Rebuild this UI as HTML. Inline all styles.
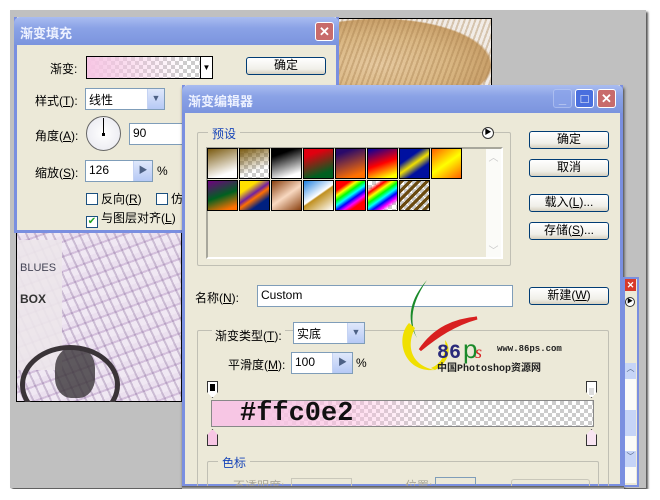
<!DOCTYPE html>
<html><head><meta charset="utf-8"><style>
*{box-sizing:border-box;margin:0;padding:0}
body{width:660px;height:500px;background:#fff;position:relative;overflow:hidden;font-family:"Liberation Sans","Noto Sans CJK SC",sans-serif;font-size:12px;color:#000}
.a{position:absolute}
.chk{background-color:#fff;background-image:linear-gradient(45deg,#ccc 25%,transparent 25%,transparent 75%,#ccc 75%),linear-gradient(45deg,#ccc 25%,transparent 25%,transparent 75%,#ccc 75%);background-size:8px 8px;background-position:0 0,4px 4px}
.win{background:#ece9d8;border:3px solid #7a8fe0;border-top:none}
.tb{background:linear-gradient(#a9bcf0,#8aa2e6 40%,#7b94de);color:#eef2ff;font-weight:bold;font-size:13px;padding:6px 6px}
.btn{position:absolute;border:1px solid #003c74;border-radius:3px;background:linear-gradient(#fff,#f0efe8 70%,#d6d0c0);text-align:center;font-size:12px;line-height:15px}
.inp{position:absolute;background:#fff;border:1px solid #7f9db9;font-size:12px;padding:2px 3px}
.sp{position:absolute;right:0;top:0;bottom:0;background:linear-gradient(#dfe8fb,#b6c9f5);border-left:1px solid #c5d3f3;color:#4d6185;text-align:center;font-size:9px}
.grp{position:absolute;border:1px solid #c0bfb4;border-radius:2px}
.gl{position:absolute;background:#ece9d8;color:#1644b8;padding:0 4px;font-size:12px}
.cb{display:inline-block;width:12px;height:12px;border:1px solid #1c5180;background:#fff;vertical-align:-2px;margin-right:3px}
.sw{position:absolute;width:31px;height:31px;border:1px solid #000}
.wb{position:absolute;top:4px;width:19px;height:19px;border:1px solid #fff;border-radius:3px;color:#fff;text-align:center;font-size:13px;line-height:17px;font-weight:bold}
</style></head><body>
<!-- canvas -->
<div class="a" style="left:10px;top:10px;width:636px;height:478px;background:#c0c0c0;box-shadow:2px 2px 2px #555"></div>
<div class="a" style="left:330px;top:18px;width:162px;height:68px;border:1px solid #000;background:repeating-linear-gradient(110deg,rgba(160,120,70,.35) 0 2px,transparent 2px 5px),radial-gradient(ellipse at 30% 70%,#e6c9a0,#d9b682 45%,#c9a06a 70%,#f2ece6 72%)"></div>
<div class="a" style="left:16px;top:232px;width:166px;height:170px;border:1px solid #000;background:repeating-linear-gradient(65deg,transparent 0 6px,rgba(120,90,140,.3) 6px 8px),repeating-linear-gradient(-20deg,#f0e8f3 0 7px,#d4c0dc 7px 9px,#ebe0ef 9px 14px)"></div>
<div class="a" style="left:17px;top:240px;width:45px;height:130px;background:#ece6ea;opacity:.9"></div>
<div class="a" style="left:20px;top:262px;font-size:11px;color:#445">BLUES</div>
<div class="a" style="left:20px;top:292px;font-size:12px;color:#333;font-weight:bold">BOX</div>
<div class="a" style="left:20px;top:345px;width:100px;height:80px;border:5px solid #3a3438;border-radius:50%;clip-path:inset(0 0 0 0)"></div>
<div class="a" style="left:55px;top:348px;width:40px;height:50px;background:#3a3438;border-radius:40%;opacity:.8"></div>
<div class="a" style="left:16px;top:402px;width:166px;height:30px;background:#c0c0c0"></div>

<!-- dialog 1 -->
<div class="a win" style="left:14px;top:17px;width:325px;height:216px">
 <div class="tb" style="margin:0 -3px;height:28px;border-radius:6px 6px 0 0">渐变填充</div>
</div>
<div class="wb" style="left:315px;top:22px;background:#c86b6b">✕</div>
<div class="a" style="left:50px;top:60px">渐变:</div>
<div class="a chk" style="left:86px;top:56px;width:127px;height:23px;border:1px solid #000"><div style="width:100%;height:100%;background:linear-gradient(90deg,#f7c6e4 0%,rgba(255,192,226,0) 80%)"></div></div>
<div class="a" style="left:200px;top:57px;width:12px;height:21px;background:#fff;border-left:1px solid #000;font-size:8px;text-align:center;line-height:21px">▼</div>
<div class="btn" style="left:246px;top:57px;width:80px;height:18px">确定</div>
<div class="a" style="left:35px;top:92px">样式(<u>T</u>):</div>
<div class="inp" style="left:85px;top:88px;width:80px;height:22px">线性<div class="sp" style="width:17px;line-height:18px">▼</div></div>
<div class="a" style="left:35px;top:127px">角度(<u>A</u>):</div>
<div class="a" style="left:86px;top:116px;width:35px;height:35px;border-radius:50%;border:1px solid #666;background:radial-gradient(#fff,#e6e6ee)"></div>
<div class="a" style="left:103px;top:118px;width:1px;height:16px;background:#000"></div>
<div class="a" style="left:102px;top:133px;width:3px;height:3px;background:#000"></div>
<div class="inp" style="left:129px;top:123px;width:60px;height:22px">90</div>
<div class="a" style="left:35px;top:164px">缩放(<u>S</u>):</div>
<div class="inp" style="left:85px;top:160px;width:68px;height:22px">126<div class="sp" style="width:19px;line-height:18px">▶</div></div>
<div class="a" style="left:157px;top:164px">%</div>
<div class="a" style="left:86px;top:190px"><span class="cb"></span>反向(<u>R</u>)</div>
<div class="a" style="left:156px;top:190px"><span class="cb"></span>仿</div>
<div class="a" style="left:86px;top:209px"><span class="cb" style="color:#21a121;font-size:10px;line-height:10px;text-align:center">✔</span>与图层对齐(<u>L</u>)</div>

<!-- dialog 2 -->
<div class="a win" style="left:182px;top:85px;width:441px;height:402px;box-shadow:1px 3px 3px #333">
 <div class="tb" style="margin:0 -3px;height:28px;border-radius:6px 6px 0 0">渐变编辑器</div>
</div>
<div class="wb" style="left:553px;top:89px;background:#8aa3ea;border-color:#b8c8f4;opacity:.7">_</div>
<div class="wb" style="left:575px;top:89px;background:#4a6fde">□</div>
<div class="wb" style="left:597px;top:89px;background:#c86b6b">✕</div>

<div class="grp" style="left:197px;top:132px;width:314px;height:134px"></div>
<div class="gl" style="left:208px;top:125px">预设</div>
<div class="a" style="left:482px;top:127px;width:12px;height:12px;border:1px solid #333;border-radius:50%;background:#fff;font-size:7px;line-height:10px;text-align:center">▶</div>
<div class="a" style="left:206px;top:147px;width:297px;height:112px;border:2px solid #a8a79c;border-right-color:#fff;border-bottom-color:#fff"></div>
<div class="a" style="left:486px;top:149px;width:15px;height:108px;background:#fbfbf8"><div style="height:16px;color:#c8c8c8;font-size:10px;text-align:center">︿</div><div style="position:absolute;bottom:0;width:15px;color:#c8c8c8;font-size:10px;text-align:center">﹀</div></div>
<div class="sw" style="left:207px;top:148px;background:linear-gradient(160deg,#7a5a10,#fff 80%)"></div>
<div class="sw chk" style="left:239px;top:148px"><div style="width:100%;height:100%;background:linear-gradient(160deg,#7a5a10,rgba(122,90,16,0) 70%)"></div></div>
<div class="sw" style="left:271px;top:148px;background:linear-gradient(160deg,#000 20%,#fff 85%)"></div>
<div class="sw" style="left:303px;top:148px;background:linear-gradient(160deg,#e00010 20%,#006020 80%)"></div>
<div class="sw" style="left:335px;top:148px;background:linear-gradient(160deg,#2a0a6a 15%,#ff7000 85%)"></div>
<div class="sw" style="left:367px;top:148px;background:linear-gradient(160deg,#0000a0,#f00 50%,#ff0 90%)"></div>
<div class="sw" style="left:399px;top:148px;background:linear-gradient(145deg,#0010a0 30%,#f0e000 50%,#0010a0 70%)"></div>
<div class="sw" style="left:431px;top:148px;background:linear-gradient(145deg,#ff6000,#ff0 50%,#ff6000)"></div>
<div class="sw" style="left:207px;top:180px;background:linear-gradient(160deg,#700080,#006020 50%,#ff7000 90%)"></div>
<div class="sw" style="left:239px;top:180px;background:linear-gradient(145deg,#ffe000 25%,#7020a0 45%,#ff7000 55%,#002080 75%)"></div>
<div class="sw" style="left:271px;top:180px;background:linear-gradient(145deg,#8a4010,#f8d8c0 50%,#8a4010)"></div>
<div class="sw" style="left:303px;top:180px;background:linear-gradient(145deg,#2080e0,#fff 48%,#c09020 52%,#fff)"></div>
<div class="sw" style="left:335px;top:180px;background:linear-gradient(145deg,red 20%,#ff0,#0f0,#0ff,#00f,#f0f,red 80%)"></div>
<div class="sw chk" style="left:367px;top:180px"><div style="width:100%;height:100%;background:linear-gradient(145deg,transparent 15%,red,#ff0,#0f0,#0ff,#00f,#f0f,transparent 85%)"></div></div>
<div class="sw chk" style="left:399px;top:180px"><div style="width:100%;height:100%;background:repeating-linear-gradient(135deg,#6a4a10 0 3px,transparent 3px 6px)"></div></div>

<div class="btn" style="left:529px;top:131px;width:80px;height:18px">确定</div>
<div class="btn" style="left:529px;top:159px;width:80px;height:18px">取消</div>
<div class="btn" style="left:529px;top:194px;width:80px;height:18px">载入(<u>L</u>)...</div>
<div class="btn" style="left:529px;top:222px;width:80px;height:18px">存储(<u>S</u>)...</div>

<div class="a" style="left:195px;top:289px">名称(<u>N</u>):</div>
<div class="inp" style="left:257px;top:285px;width:256px;height:22px">Custom</div>
<div class="btn" style="left:529px;top:287px;width:80px;height:18px">新建(<u>W</u>)</div>

<div class="grp" style="left:197px;top:330px;width:412px;height:157px;border-bottom:none"></div>
<div class="a" style="left:212px;top:327px;background:#ece9d8;padding:0 3px">渐变类型(<u>T</u>):</div>
<div class="inp" style="left:293px;top:322px;width:72px;height:22px">实底<div class="sp" style="width:17px;line-height:18px">▼</div></div>
<div class="a" style="left:228px;top:356px">平滑度(<u>M</u>):</div>
<div class="inp" style="left:291px;top:352px;width:62px;height:22px">100<div class="sp" style="width:20px;line-height:18px">▶</div></div>
<div class="a" style="left:356px;top:356px">%</div>

<!-- logo -->
<svg class="a" style="left:375px;top:278px" width="210" height="100">
 <path d="M52 2 C36 20 30 40 42 60 C32 40 40 20 52 2Z" fill="#1a8a2a"/>
 <path d="M45 72 C60 50 80 42 102 40 C80 46 62 58 45 72Z" fill="#d82020" stroke="#d82020" stroke-width="3"/>
 <path d="M34 45 C20 60 28 95 60 92 C38 88 30 70 40 50Z" fill="#f0e000"/>
 <path d="M60 92 C72 86 78 72 70 62 C72 76 66 86 56 90Z" fill="#f0e000"/>
 <text x="62" y="80" font-family="Liberation Mono,monospace" font-size="20" font-weight="bold" fill="#2a2a7a">86</text>
 <text x="88" y="80" font-family="Liberation Sans,sans-serif" font-size="26" fill="#1a8a2a">p</text>
 <text x="100" y="80" font-family="Liberation Serif,serif" font-size="18" fill="#d82020" font-style="italic">s</text>
 <text x="122" y="73" font-family="Liberation Mono,monospace" font-size="9" font-weight="bold" fill="#222">www.86ps.com</text>
 <text x="62" y="93" font-family="Liberation Mono,'Noto Sans CJK SC',monospace" font-size="10" font-weight="bold" fill="#222">中国Photoshop资源网</text>
</svg>

<!-- gradient bar -->
<div class="a" style="left:207px;top:381px;width:11px;height:17px;background:#fff;border:1px solid #333;clip-path:polygon(0 0,100% 0,100% 65%,50% 100%,0 65%)"><div style="margin:2px;height:7px;background:#000"></div></div>
<div class="a" style="left:586px;top:381px;width:11px;height:17px;background:#fff;border:1px solid #333;clip-path:polygon(0 0,100% 0,100% 65%,50% 100%,0 65%)"><div style="margin:2px;height:7px;background:#ddd;margin-top:6px"></div></div>
<div class="a chk" style="left:211px;top:400px;width:383px;height:27px;border:1px solid #888"><div style="width:100%;height:100%;background:linear-gradient(90deg,#f7c6e4 0%,#f7c6e4 12%,rgba(255,192,226,.6) 35%,rgba(255,192,226,0) 60%)"></div></div>
<div class="a" style="left:240px;top:398px;font-family:'Liberation Mono',monospace;font-weight:bold;font-size:27px;line-height:32px;color:#111">#ffc0e2</div>
<div class="a" style="left:207px;top:429px;width:11px;height:17px;background:#f7c6e4;border:1px solid #333;clip-path:polygon(50% 0,100% 35%,100% 100%,0 100%,0 35%)"></div>
<div class="a" style="left:586px;top:429px;width:11px;height:17px;background:#f8e4f2;border:1px solid #333;clip-path:polygon(50% 0,100% 35%,100% 100%,0 100%,0 35%)"></div>

<div class="grp" style="left:207px;top:461px;width:392px;height:26px;border-bottom:none"></div>
<div class="gl" style="left:218px;top:454px">色标</div>
<div class="a" style="left:233px;top:479px;height:8px;overflow:hidden;color:#aca899;line-height:14px">不透明度:</div>
<div class="a" style="left:291px;top:478px;width:61px;height:9px;border:1px solid #c9c7ba;border-bottom:none"></div>
<div class="a" style="left:405px;top:479px;height:8px;overflow:hidden;color:#aca899;line-height:14px">位置:</div>
<div class="a" style="left:435px;top:477px;width:41px;height:10px;border:1px solid #7f9db9;border-bottom:none"></div>
<div class="a" style="left:511px;top:479px;width:79px;height:8px;border:1px solid #c9c7ba;border-bottom:none;border-radius:3px 3px 0 0"></div>

<!-- right partial window -->
<div class="a" style="left:622px;top:277px;width:17px;height:210px;background:#ece9d8;border:2px solid #7a8fe0;border-left-width:3px"></div>
<div class="a" style="left:625px;top:279px;width:11px;height:12px;background:#d83a2a;color:#fff;font-size:9px;line-height:12px;text-align:center;font-weight:bold">✕</div>
<div class="a" style="left:625px;top:297px;width:10px;height:10px;border:1px solid #333;border-radius:50%;background:#fff;font-size:6px;line-height:8px;text-align:center">▶</div>
<div class="a" style="left:625px;top:363px;width:11px;height:120px;background:#fbfbf8"></div>
<div class="a" style="left:625px;top:363px;width:11px;height:16px;background:#c6d4f7;font-size:8px;color:#4d6185;text-align:center">︿</div>
<div class="a" style="left:625px;top:410px;width:11px;height:26px;background:#c6d4f7"></div>
<div class="a" style="left:625px;top:451px;width:11px;height:16px;background:#c6d4f7;font-size:8px;color:#4d6185;text-align:center">﹀</div>

<div class="a" style="left:182px;top:486px;width:442px;height:3px;background:linear-gradient(#555,#bbb);z-index:40"></div>
<div class="a" style="left:0;top:489px;width:660px;height:11px;background:#fff;z-index:50"></div>
</body></html>
